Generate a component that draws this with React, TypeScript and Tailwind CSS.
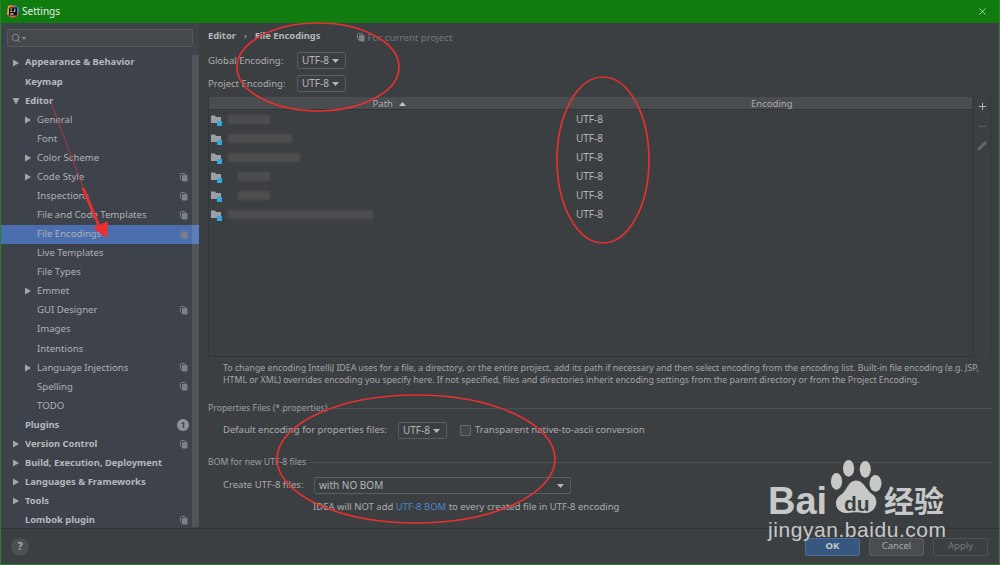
import { Search, X, Plus, Minus, Pencil } from 'lucide-react';

type NavItem = { label: string; level: 0 | 1; arrow?: 'right' | 'down'; copy?: boolean; badge?: string; selected?: boolean };

const navItems: NavItem[] = [
    { label: 'Appearance & Behavior', level: 0, arrow: 'right' },
    { label: 'Keymap', level: 0 },
    { label: 'Editor', level: 0, arrow: 'down' },
    { label: 'General', level: 1, arrow: 'right' },
    { label: 'Font', level: 1 },
    { label: 'Color Scheme', level: 1, arrow: 'right' },
    { label: 'Code Style', level: 1, arrow: 'right', copy: true },
    { label: 'Inspections', level: 1, copy: true },
    { label: 'File and Code Templates', level: 1, copy: true },
    { label: 'File Encodings', level: 1, copy: true, selected: true },
    { label: 'Live Templates', level: 1 },
    { label: 'File Types', level: 1 },
    { label: 'Emmet', level: 1, arrow: 'right' },
    { label: 'GUI Designer', level: 1, copy: true },
    { label: 'Images', level: 1 },
    { label: 'Intentions', level: 1 },
    { label: 'Language Injections', level: 1, arrow: 'right', copy: true },
    { label: 'Spelling', level: 1, copy: true },
    { label: 'TODO', level: 1 },
    { label: 'Plugins', level: 0, badge: '1' },
    { label: 'Version Control', level: 0, arrow: 'right', copy: true },
    { label: 'Build, Execution, Deployment', level: 0, arrow: 'right' },
    { label: 'Languages & Frameworks', level: 0, arrow: 'right' },
    { label: 'Tools', level: 0, arrow: 'right' },
    { label: 'Lombok plugin', level: 0, copy: true },
];

// zones floutées dans la colonne Path
const pathRows = [
    { blur: 42, left: 5 },
    { blur: 64, left: 5 },
    { blur: 72, left: 5 },
    { blur: 32, left: 15 },
    { blur: 32, left: 15 },
    { blur: 145, left: 5 },
];

function CopyIcon({ className = '' }: { className?: string }) {
    return (
        <svg width="8" height="9" viewBox="0 0 8 9" className={`shrink-0 ${className}`}>
            <rect x="0.5" y="0.5" width="5" height="6" rx="1" fill="none" stroke="#7d8187" />
            <rect x="2" y="2" width="5.5" height="6.5" rx="1" fill="#7d8187" />
        </svg>
    );
}

function Arrow({ dir }: { dir: 'right' | 'down' }) {
    return (
        <svg width="8" height="8" viewBox="0 0 8 8">
            {dir === 'right' ? <path d="M1 0.5 L7 4 L1 7.5 Z" fill="#a4a7aa" /> : <path d="M0.5 1 L7.5 1 L4 7.5 Z" fill="#a4a7aa" />}
        </svg>
    );
}

function Caret() {
    return (
        <svg width="7" height="4" viewBox="0 0 7 4" className="shrink-0">
            <path d="M0 0 L7 0 L3.5 4 Z" fill="#b4b7ba" />
        </svg>
    );
}

function Combo({ text, width }: { text: string; width: string }) {
    return (
        <div className={`flex h-[17px] shrink-0 items-center justify-between whitespace-nowrap rounded-[2px] border border-[#5a5d5f] bg-[#3c3f41] pl-[4px] pr-[6px] text-[10px] text-[#b4b7ba] ${width}`}>
            <span>{text}</span>
            <Caret />
        </div>
    );
}

function FolderIcon() {
    return (
        <svg width="12" height="12" viewBox="0 0 12 12" className="shrink-0">
            <path d="M0 1.5 H4 L5 3 H10 V9 H0 Z" fill="#9aa0a6" />
            <rect x="6" y="7" width="5" height="5" fill="#35a7dc" />
        </svg>
    );
}

function Sidebar() {
    return (
        <aside className="relative flex w-[198px] shrink-0 flex-col bg-[#3e424a] pt-[6px]">
            <div className="mx-[6px] flex h-[18px] shrink-0 items-center rounded-[2px] border border-[#55585a] bg-[#46494b] pl-[3px]">
                <Search size={10} className="text-[#8f9295]" />
                <svg width="4" height="3" viewBox="0 0 4 3" className="ml-[1px]">
                    <path d="M0 0 H4 L2 3 Z" fill="#8f9295" />
                </svg>
            </div>
            <ul className="mt-[6px] shrink-0">
                {navItems.map((item) => (
                    <li
                        key={item.label}
                        className={`flex h-[19.08px] items-center pr-[11px] ${item.selected ? 'bg-[#4b6eaf]' : ''}`}
                    >
                        <span className={`flex shrink-0 ${item.level === 1 ? 'w-[36px] pl-[23px]' : 'w-[24px] pl-[11px]'}`}>
                            {item.arrow ? <Arrow dir={item.arrow} /> : null}
                        </span>
                        <span className={`flex-1 whitespace-nowrap ${item.level === 0 ? 'text-[9.4px] font-bold text-[#b6b9bc]' : 'text-[9.6px] text-[#aeb1b4]'}`}>
                            {item.label}
                        </span>
                        {item.copy ? <CopyIcon /> : null}
                        {item.badge ? (
                            <span className="mr-[-1px] flex h-[12px] w-[12px] items-center justify-center rounded-full bg-[#8d9297] text-[8px] font-bold text-[#3e424a]">
                                {item.badge}
                            </span>
                        ) : null}
                    </li>
                ))}
            </ul>
            {/* scrollbar passes over the selected row */}
            <div className="absolute right-0 top-[32px] h-[472px] w-[7px] bg-white/10" />
        </aside>
    );
}

function EncodingPanel() {
    return (
        <main className="flex min-w-0 flex-1 flex-col pl-[9px] pr-[7px] text-[9.5px] text-[#a9acaf]">
            <div className="mt-[6px] flex h-[13px] shrink-0 items-center text-[#b3b6b9]">
                <span className="text-[9.3px] font-bold">Editor</span>
                <span className="mx-[8px] text-[9px]">›</span>
                <span className="text-[9.3px] font-bold">File Encodings</span>
                <CopyIcon className="ml-[37px] mt-[4px]" />
                <span className="ml-[2px] mt-[5px] text-[9.7px] text-[#72767a]">For current project</span>
            </div>

            <div className="mt-[10px] flex items-center">
                <span className="w-[89px] whitespace-nowrap pt-[2px]">Global Encoding:</span>
                <Combo text="UTF-8" width="w-[49px]" />
            </div>
            <div className="mt-[6px] flex items-center">
                <span className="w-[89px] whitespace-nowrap pt-[2px]">Project Encoding:</span>
                <Combo text="UTF-8" width="w-[49px]" />
            </div>

            {/* Table */}
            <div className="mt-[5px] flex h-[260px] shrink-0">
                <div className="w-[764px] border-b border-l border-[#333638]">
                    <div className="flex h-[13px] items-center border-b border-[#323436] bg-[#4a4d50] pt-[2px] text-[#a9acaf]">
                        <span className="flex w-[366px] items-center justify-end gap-[6px] pr-[169px]">
                            Path
                            <svg width="7" height="4" viewBox="0 0 7 4">
                                <path d="M3.5 0 L7 4 L0 4 Z" fill="#bfc2c5" />
                            </svg>
                        </span>
                        <span className="flex-1 pl-[176px]">Encoding</span>
                    </div>
                    {pathRows.map((row, i) => (
                        <div key={i} className="flex h-[19px] items-center pl-[2px]">
                            <FolderIcon />
                            <div className="w-[353px]" style={{ paddingLeft: row.left }}>
                                <div className="h-[9px] bg-[#4b4d4f] blur-[1px]" style={{ width: row.blur }} />
                            </div>
                            <span className="text-[10px] text-[#b4b7ba]">UTF-8</span>
                        </div>
                    ))}
                </div>
                <div className="ml-[1px] flex w-[18px] flex-col items-center gap-[9px] border-x border-[#333638] pt-[4px]">
                    <Plus size={11} strokeWidth={2} className="text-[#b9bcbf]" />
                    <Minus size={11} strokeWidth={2} className="text-[#65686b]" />
                    <Pencil size={10} className="fill-[#65686b] text-[#65686b]" />
                </div>
            </div>

            <p className="mt-[5px] w-[781px] pl-[15px] text-[8.8px] leading-[12px] text-[#a3a6a9]">
                To change encoding IntelliJ IDEA uses for a file, a directory, or the entire project, add its path if necessary and then select encoding from the encoding list. Built-in file encoding (e.g. JSP, HTML or XML) overrides encoding you specify here. If not specified, files and directories inherit encoding settings from the parent directory or from the Project Encoding.
            </p>

            <div className="mt-[16px] flex items-center gap-[4px] text-[8.7px] leading-[12px] text-[#9c9fa2]">
                <span>Properties Files (*.properties)</span>
                <div className="h-px flex-1 bg-[#4d5052]" />
            </div>
            <div className="mt-[8px] flex items-center pl-[15px]">
                <span className="w-[175px] whitespace-nowrap">Default encoding for properties files:</span>
                <Combo text="UTF-8" width="w-[49px]" />
                <span className="ml-[13px] h-[11px] w-[11px] rounded-[1px] border border-[#66696b] bg-[#43464a]" />
                <span className="ml-[4px] whitespace-nowrap">Transparent native-to-ascii conversion</span>
            </div>

            <div className="mt-[17px] flex items-center gap-[4px] text-[8.7px] leading-[12px] text-[#9c9fa2]">
                <span>BOM for new UTF-8 files</span>
                <div className="h-px flex-1 bg-[#4d5052]" />
            </div>
            <div className="mt-[9px] flex items-center pl-[15px]">
                <span className="w-[91px] whitespace-nowrap">Create UTF-8 files:</span>
                <Combo text="with NO BOM" width="w-[257px]" />
            </div>
            <div className="mt-[6px] pl-[105px]">
                IDEA will NOT add <span className="text-[#4a86c8]">UTF-8 BOM</span> to every created file in UTF-8 encoding
            </div>
        </main>
    );
}

function FooterBar() {
    return (
        <footer className="flex h-[35px] shrink-0 items-center justify-between pl-[10px] pr-[11px]">
            <span className="flex h-[18px] w-[18px] items-center justify-center rounded-full bg-[#4d5052] text-[11px] font-bold text-[#a9acaf]">?</span>
            <div className="flex gap-[9px] text-[9.5px]">
                <button className="h-[18px] w-[55px] rounded-[2px] border border-[#4a6c96] bg-[#365880] font-bold text-[#c9ccce]">OK</button>
                <button className="h-[18px] w-[55px] rounded-[2px] border border-[#5a5d5f] bg-[#4a4d4f] text-[#a9acaf]">Cancel</button>
                <button className="h-[18px] w-[55px] rounded-[2px] border border-[#4d5052] bg-[#3c3f41] text-[#75787b]">Apply</button>
            </div>
        </footer>
    );
}

function Watermark() {
    return (
        <div className="absolute left-[767px] top-[458px] h-[84px] w-[180px] font-['Liberation_Sans',sans-serif] leading-none text-[#c7c9c9]">
            <svg width="52" height="58" viewBox="0 0 56 58" className="absolute left-[62px] top-0">
                <ellipse cx="20" cy="9" rx="6" ry="9" fill="#c7c9c9" />
                <ellipse cx="38" cy="10" rx="6" ry="9" fill="#c7c9c9" />
                <ellipse cx="7" cy="23" rx="6" ry="9" fill="#c7c9c9" />
                <ellipse cx="49" cy="25" rx="6.5" ry="9" fill="#c7c9c9" />
                <path d="M28 22 C37 22 38 32 46 37 C54 43 49 58 37 57 C31 56 25 56 19 57 C7 58 2 45 11 38 C19 33 19 22 28 22 Z" fill="#c7c9c9" />
            </svg>
            <span className="absolute left-0 top-[24px] text-[38px] font-bold">Bai</span>
            <span className="absolute left-[76px] top-[35px] text-[21px] font-bold text-[#3c3f41]">du</span>
            <span className="absolute left-[116px] top-[26px] font-['Noto_Sans_CJK_SC',sans-serif] text-[30px] font-bold">经验</span>
            <span className="absolute left-0 top-[61px] whitespace-nowrap text-[21px] tracking-[0.55px]">jingyan.baidu.com</span>
        </div>
    );
}

function Annotations() {
    return (
        <svg width="1000" height="565" viewBox="0 0 1000 565" className="pointer-events-none absolute left-0 top-0">
            <g fill="none" stroke="#e5312f" strokeWidth="1.7">
                <ellipse cx="317" cy="67" rx="81" ry="44" />
                <ellipse cx="602" cy="160" rx="46" ry="83" />
                <ellipse cx="415" cy="459" rx="139" ry="64" />
            </g>
            <path d="M51 105 L83 190" stroke="#b03a40" strokeWidth="1" />
            <path d="M82 188 L98 226" stroke="#ec2f2f" strokeWidth="3" />
            <path d="M92 228 L107 221 L106 238 Z" fill="#ec2f2f" />
        </svg>
    );
}

function IdeLogo() {
    return (
        <svg width="12" height="13" viewBox="0 0 12 13" className="shrink-0">
            <path d="M1 1 L7 0 L12 3 L11 11 L5 13 L0 10 Z" fill="#e2554f" />
            <path d="M7 0 L12 3 L11 9 L8 5 Z" fill="#3a7bd5" />
            <path d="M1 1 L4 0 L3 8 L0 10 Z" fill="#f0a030" />
            <rect x="2" y="2.5" width="8" height="8" fill="#111114" />
            <rect x="3" y="8.5" width="3.5" height="1" fill="#ffffff" />
            <path d="M3.2 3.5 H5 V4.1 H4.4 V6.4 H5 V7 H3.2 V6.4 H3.8 V4.1 H3.2 Z M7.5 3.5 H8.3 V6 Q8.3 7 7.2 7 H6 V6.4 H7 Q7.5 6.4 7.5 6 Z" fill="#ffffff" />
        </svg>
    );
}

export default function App() {
    return (
        <div className="relative flex h-[565px] w-[1000px] flex-col overflow-hidden border-x border-b border-[#2f7d2f] bg-[#3c3f41] font-['Noto_Sans',sans-serif]">
            <header className="-mx-px flex h-[23px] shrink-0 items-center bg-[#107c10] pl-[7px] pr-[12px] text-[10px] text-[#e4efe4]">
                <IdeLogo />
                <span className="ml-[3px] flex-1">Settings</span>
                <X size={11} strokeWidth={1.5} className="text-[#e8f2e8]" />
            </header>
            <div className="flex min-h-0 flex-1 border-b border-[#323537]">
                <Sidebar />
                <EncodingPanel />
            </div>
            <FooterBar />
            <Watermark />
            <Annotations />
        </div>
    );
}
